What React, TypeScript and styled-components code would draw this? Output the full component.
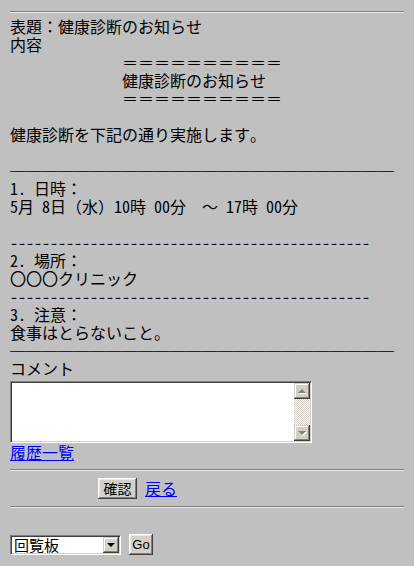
import React from "react";
import styled, { createGlobalStyle } from "styled-components";

const GlobalStyle = createGlobalStyle`
  body {
    margin: 0;
    background: #c0c0c0;
    font-family: "Noto Sans Mono CJK JP", "Noto Sans CJK JP", "Liberation Sans", sans-serif;
    font-size: 16px;
    line-height: 18px;
    color: #000;
  }
`;

const message = [
  "表題：健康診断のお知らせ",
  "内容",
  "　　　　　　　＝＝＝＝＝＝＝＝＝＝",
  "　　　　　　　健康診断のお知らせ",
  "　　　　　　　＝＝＝＝＝＝＝＝＝＝",
  "",
  "健康診断を下記の通り実施します。",
  "",
  "rule",
  "1. 日時：",
  "5月 8日（水）10時 00分　～ 17時 00分",
  "",
  "dash",
  "2. 場所：",
  "〇〇〇クリニック",
  "dash",
  "3. 注意：",
  "食事はとらないこと。",
  "rule",
];

const App: React.FC = () => {
  return (
    <Page>
      <GlobalStyle />
      <Rule />
      <Text>
        {message.map((line, i) => {
          if (line === "rule") return <Line key={i}><Bar>{"─".repeat(24)}</Bar></Line>;
          if (line === "dash") return <Line key={i}>{"-".repeat(45)}</Line>;
          return <Line key={i}>{line || "\u00a0"}</Line>;
        })}
        <Line>コメント</Line>
      </Text>
      <TextBox>
        <Area />
        <ScrollBar>
          <ArrowButton><Arrow $up /></ArrowButton>
          <Track />
          <ArrowButton><Arrow /></ArrowButton>
        </ScrollBar>
      </TextBox>
      <Link href="#">履歴一覧</Link>
      <Rule $gap />
      <Actions>
        <Button>確認</Button>
        <Link href="#">戻る</Link>
      </Actions>
      <Rule $gap />
      <Footer>
        <SelectBox>
          <Select defaultValue="kairan">
            <option value="kairan">回覧板</option>
          </Select>
          <DropButton><DropArrow /></DropButton>
        </SelectBox>
        <GoButton>Go</GoButton>
      </Footer>
    </Page>
  );
};

const Page = styled.div`
  padding: 11px 10px 0;
`;

const Rule = styled.div<{ $gap?: boolean }>`
  height: 0;
  border-top: 1px solid #808080;
  border-bottom: 1px solid #e8e8e8;
  margin: ${(p) => (p.$gap ? "8px 0 7px" : "0 0 4px")};
`;

const Text = styled.div`
  white-space: pre;
`;

const Line = styled.div`
  height: 18px;
  line-height: 18px;
`;

const Bar = styled.span`
  display: inline-block;
  width: 384px;
  vertical-align: top;
  font-family: "Noto Sans CJK JP", sans-serif;
  color: #000;
`;

const TextBox = styled.div`
  display: flex;
  width: 298px;
  height: 58px;
  margin-top: 4px;
  border-style: solid;
  border-width: 1px;
  border-color: #808080 #ffffff #ffffff #808080;
  box-shadow: inset 1px 1px #404040, inset -1px -1px #d4d0c8;
  padding: 1px;
  background: #fff;
`;

const Area = styled.textarea`
  flex: 1;
  border: none;
  outline: none;
  resize: none;
  margin: 0;
  padding: 0;
  background: #fff;
`;

const ScrollBar = styled.div`
  width: 16px;
  display: flex;
  flex-direction: column;
`;

const ArrowButton = styled.div`
  width: 16px;
  height: 16px;
  flex: none;
  box-sizing: border-box;
  background: #d4d0c8;
  box-shadow: inset -1px -1px #404040, inset 1px 1px #d4d0c8,
    inset -2px -2px #808080, inset 2px 2px #ffffff;
  display: flex;
  align-items: center;
  justify-content: center;
`;

const Arrow = styled.span<{ $up?: boolean }>`
  width: 0;
  height: 0;
  border-left: 4px solid transparent;
  border-right: 4px solid transparent;
  ${(p) => (p.$up ? "border-bottom: 4px solid #808080;" : "border-top: 4px solid #808080;")}
  filter: drop-shadow(1px 1px 0 #ffffff);
`;

const Track = styled.div`
  flex: 1;
  background-color: #ffffff;
  background-image: repeating-conic-gradient(#d4d0c8 0 25%, #ffffff 0 50%);
  background-size: 2px 2px;
`;

const Link = styled.a`
  color: #0000ff;
  text-decoration: underline;
  line-height: 18px;
  display: inline-block;
`;

const Actions = styled.div`
  display: flex;
  align-items: center;
  gap: 8px;
  padding-left: 88px;
  height: 20px;
`;

const Button = styled.button`
  font-family: "Noto Sans CJK JP", sans-serif;
  font-size: 14px;
  line-height: 15px;
  width: 39px;
  height: 21px;
  padding: 0;
  background: #d4d0c8;
  color: #000;
  border: none;
  box-shadow: inset -1px -1px #404040, inset 1px 1px #ffffff,
    inset -2px -2px #808080, inset 2px 2px #e8e8e8;
`;

const Footer = styled.div`
  display: flex;
  align-items: center;
  gap: 8px;
  margin-top: 26px;
`;

const SelectBox = styled.div`
  display: flex;
  width: 107px;
  height: 16px;
  border-style: solid;
  border-width: 1px;
  border-color: #808080 #ffffff #ffffff #808080;
  box-shadow: inset 1px 1px #404040, inset -1px -1px #d4d0c8;
  padding: 1px;
  background: #fff;
`;

const Select = styled.select`
  flex: 1;
  min-width: 0;
  appearance: none;
  border: none;
  outline: none;
  background: #fff;
  font-family: "Noto Sans CJK JP", sans-serif;
  font-size: 15px;
  line-height: 16px;
  height: 16px;
  padding: 0 2px;
  margin: 0;
  color: #000;
`;

const DropButton = styled(ArrowButton)`
  width: 16px;
  height: 16px;
`;

const DropArrow = styled.span`
  width: 0;
  height: 0;
  border-left: 4px solid transparent;
  border-right: 4px solid transparent;
  border-top: 4px solid #000;
`;

const GoButton = styled(Button)`
  font-family: "Liberation Sans", sans-serif;
  font-size: 13px;
  width: 24px;
`;

export default App;
